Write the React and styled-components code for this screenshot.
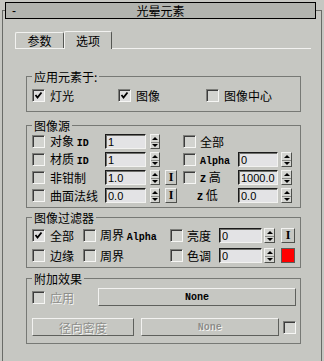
import React from "react";
import styled, { createGlobalStyle } from "styled-components";

const BG = "#c6c7c2";

const GlobalStyle = createGlobalStyle`
  html, body {
    margin: 0;
    padding: 0;
    background: ${BG};
  }
  body {
    font-family: "Noto Sans CJK SC", sans-serif;
    font-size: 12px;
    color: #000;
  }
`;

const Page = styled.div`
  width: 324px;
  height: 361px;
  overflow: hidden;
  padding-top: 10px;
  box-sizing: border-box;
  background: ${BG};
`;

const Frame = styled.div`
  margin: 0 2px;
  height: 351px;
  box-sizing: border-box;
  border: 1px solid #696b67;
  border-bottom: none;
`;

const TitleBar = styled.div`
  margin: -9px 0 0 2px;
  width: 311px;
  height: 17px;
  box-sizing: border-box;
  border: 1px solid #000;
  background: #b2b4af;
  display: grid;
  grid-template-columns: 1fr auto 1fr;
  align-items: center;
  line-height: 14px;
  padding: 0 6px;
`;

const Minus = styled.span`
  font-family: "Liberation Sans", sans-serif;
  font-size: 12px;
`;

const TabStrip = styled.div`
  margin: 12px 0 0 12px;
  width: 296px;
  height: 17px;
  border-bottom: 1px solid #f2f2f0;
  display: flex;
  align-items: flex-end;
`;

const Tab = styled.div`
  width: ${(p) => p.$w}px;
  height: ${(p) => (p.$sel ? 18 : 16)}px;
  margin-bottom: ${(p) => (p.$sel ? -1 : 0)}px;
  box-sizing: border-box;
  background: ${BG};
  border-top: 1px solid #f2f2f0;
  border-left: 1px solid #f2f2f0;
  border-right: 1px solid #555753;
  border-radius: 2px 2px 0 0;
  display: flex;
  align-items: center;
  justify-content: center;
  line-height: 14px;
`;

const Group = styled.fieldset`
  margin: ${(p) => p.$mt}px 0 0 23px;
  width: 275px;
  box-sizing: border-box;
  border: 1px solid #777975;
  padding: 0;
  min-width: 0;
`;

const Legend = styled.legend`
  margin-left: 5px;
  padding: 0 2px;
  line-height: 15px;
  font-size: 12px;
`;

const Body = styled.div`
  padding: ${(p) => p.$pt}px 0 ${(p) => p.$pb}px 5px;
  display: grid;
  grid-template-columns: ${(p) => p.$cols};
  grid-auto-rows: ${(p) => p.$rh || 15}px;
  row-gap: ${(p) => p.$gap || 0}px;
  align-items: center;
`;

const Label = styled.span`
  padding-left: ${(p) => p.$pl ?? 5}px;
  white-space: nowrap;
  line-height: 15px;
  color: ${(p) => (p.$off ? "#8d8e8a" : "#000")};
  text-shadow: ${(p) => (p.$off ? "1px 1px 0 #f4f4f2" : "none")};
`;

const Latin = styled.span`
  font-family: "Liberation Mono", monospace;
  font-size: 10px;
  font-weight: bold;
`;

const Box = styled.span`
  width: 13px;
  height: 13px;
  box-sizing: border-box;
  border: 1px solid;
  border-color: #7d7e7a #f6f6f4 #f6f6f4 #7d7e7a;
  box-shadow: inset 1px 1px 0 #3c3c3c;
  background: ${(p) => (p.$on ? "#dedede" : "#d2d3cf")};
  display: flex;
  align-items: center;
  justify-content: center;
`;

const Check = ({ on }) => (
  <Box $on={on}>
    {on && (
      <svg width="9" height="9" viewBox="0 0 9 9">
        <polyline
          points="1.5,4 3.5,6.5 7.5,1.5"
          fill="none"
          stroke="#000"
          strokeWidth="1.8"
        />
      </svg>
    )}
  </Box>
);

const Field = styled.input`
  width: ${(p) => p.$w}px;
  height: 15px;
  box-sizing: border-box;
  margin: 0;
  padding: 0 0 0 2px;
  border: 1px solid;
  border-color: #1a1a1a #f2f2f0 #f2f2f0 #1a1a1a;
  box-shadow: inset 1px 1px 0 #6e6f6b;
  background: #e3e3e5;
  font-family: "Liberation Sans", sans-serif;
  font-size: 11px;
  color: #000;
  outline: none;
`;

const SpinBox = styled.span`
  margin-left: ${(p) => p.$ml}px;
  width: ${(p) => p.$w}px;
  height: 15px;
  box-sizing: border-box;
  border: 1px solid;
  border-color: #f2f2f0 #4e504c #4e504c #f2f2f0;
  background: #d4d5d1;
  display: grid;
  grid-template-rows: 1fr 1fr;
`;

const Half = styled.span`
  display: flex;
  align-items: center;
  justify-content: center;
  border-top: ${(p) => (p.$down ? "1px solid #8a8b87" : "none")};
  &::after {
    content: "";
    border-left: 3px solid transparent;
    border-right: 3px solid transparent;
    ${(p) =>
      p.$down
        ? "border-top: 3px solid #000;"
        : "border-bottom: 3px solid #000;"}
  }
`;

const Spinner = ({ ml = 0, w = 11 }) => (
  <SpinBox $ml={ml} $w={w}>
    <Half />
    <Half $down />
  </SpinBox>
);

const IBtn = styled.span`
  margin-left: ${(p) => p.$ml}px;
  width: ${(p) => p.$w}px;
  height: 15px;
  box-sizing: border-box;
  border: 1px solid;
  border-color: #f2f2f0 #4e504c #4e504c #f2f2f0;
  display: flex;
  align-items: center;
  justify-content: center;
  font-family: "Liberation Serif", serif;
  font-size: 12px;
  font-weight: bold;
`;

const Swatch = styled.span`
  margin-left: ${(p) => p.$ml}px;
  width: 14px;
  height: 15px;
  box-sizing: border-box;
  border: 1px solid #5a5b57;
  background: #ff0000;
`;

const Button = styled.div`
  width: ${(p) => p.$w}px;
  height: 18px;
  margin-left: ${(p) => p.$ml || 0}px;
  box-sizing: border-box;
  border: 1px solid;
  border-color: #f2f2f0 #5e605c #5e605c #f2f2f0;
  display: flex;
  align-items: center;
  justify-content: center;
  line-height: 15px;
  color: ${(p) => (p.$off ? "#8d8e8a" : "#000")};
  text-shadow: ${(p) => (p.$off ? "1px 1px 0 #f4f4f2" : "none")};
`;

const ButtonRow = styled.div`
  display: flex;
  align-items: center;
  gap: 4px;
  grid-column: 1 / -1;
`;

const Empty = styled.span``;

export default function App() {
  return (
    <>
      <GlobalStyle />
      <Page>
        <Frame>
          <TitleBar>
            <Minus>-</Minus>
            <span>光晕元素</span>
            <span />
          </TitleBar>

          <TabStrip>
            <Tab $w={49}>参数</Tab>
            <Tab $w={48} $sel>
              选项
            </Tab>
          </TabStrip>

          <Group $mt={20}>
            <Legend>应用元素于:</Legend>
            <Body $pt={4} $pb={8} $cols="13px 73px 13px 75px 13px auto">
              <Check on />
              <Label>灯光</Label>
              <Check on />
              <Label>图像</Label>
              <Check />
              <Label>图像中心</Label>
            </Body>
          </Group>

          <Group $mt={6}>
            <Legend>图像源</Legend>
            <Body
              $pt={1}
              $pb={4}
              $gap={3}
              $cols="13px 60px 41px 14px 23px 13px 42px 40px 15px"
            >
              <Check />
              <Label>
                对象 <Latin>ID</Latin>
              </Label>
              <Field $w={41} readOnly value="1" />
              <Spinner ml={4} w={10} />
              <Empty />
              <Check />
              <Label $pl={4}>全部</Label>
              <Empty />
              <Empty />

              <Check />
              <Label>
                材质 <Latin>ID</Latin>
              </Label>
              <Field $w={41} readOnly value="1" />
              <Spinner ml={4} w={10} />
              <Empty />
              <Check />
              <Label $pl={4}>
                <Latin>Alpha</Latin>
              </Label>
              <Field $w={40} readOnly value="0" />
              <Spinner ml={3} w={11} />

              <Check />
              <Label>非钳制</Label>
              <Field $w={41} readOnly value="1.0" />
              <Spinner ml={4} w={10} />
              <IBtn $ml={5} $w={12}>
                I
              </IBtn>
              <Check />
              <Label $pl={4}>
                <Latin>Z</Latin> 高
              </Label>
              <Field $w={40} readOnly value="1000.0" />
              <Spinner ml={3} w={11} />

              <Check />
              <Label>曲面法线</Label>
              <Field $w={41} readOnly value="0.0" />
              <Spinner ml={4} w={10} />
              <IBtn $ml={5} $w={12}>
                I
              </IBtn>
              <Empty />
              <Label $pl={1}>
                <Latin>Z</Latin> 低
              </Label>
              <Field $w={40} readOnly value="0.0" />
              <Spinner ml={3} w={11} />
            </Body>
          </Group>

          <Group $mt={2}>
            <Legend>图像过滤器</Legend>
            <Body
              $pt={3}
              $pb={4}
              $gap={5}
              $cols="13px 38px 13px 74px 13px 36px 43px 16px 17px"
            >
              <Check on />
              <Label>全部</Label>
              <Check />
              <Label $pl={4}>
                周界 <Latin>Alpha</Latin>
              </Label>
              <Check />
              <Label $pl={4}>亮度</Label>
              <Field $w={43} readOnly value="0" />
              <Spinner ml={2} w={11} />
              <IBtn $ml={3} $w={14}>
                I
              </IBtn>

              <Check />
              <Label>边缘</Label>
              <Check />
              <Label $pl={4}>周界</Label>
              <Check />
              <Label $pl={4}>色调</Label>
              <Field $w={43} readOnly value="0" />
              <Spinner ml={2} w={11} />
              <Swatch $ml={3} />
            </Body>
          </Group>

          <Group $mt={3}>
            <Legend>附加效果</Legend>
            <Body $pt={2} $pb={7} $gap={12} $rh={18} $cols="13px 53px 198px">
              <Check />
              <Label $off>应用</Label>
              <Button $w={198}>
                <Latin>None</Latin>
              </Button>

              <ButtonRow>
                <Button $w={102} $off>
                  径向密度
                </Button>
                <Button $w={139} $ml={3} $off>
                  <Latin>None</Latin>
                </Button>
                <Check />
              </ButtonRow>
            </Body>
          </Group>
        </Frame>
      </Page>
    </>
  );
}
